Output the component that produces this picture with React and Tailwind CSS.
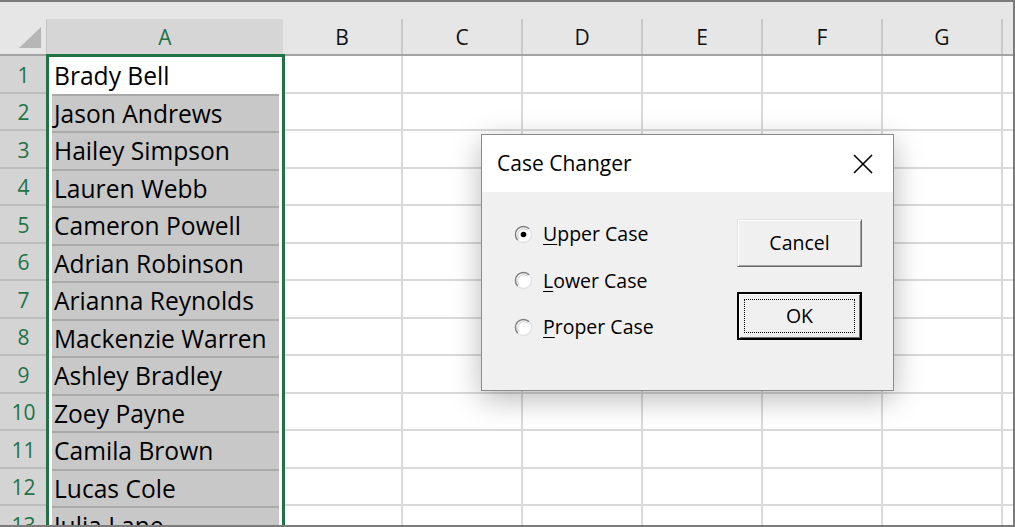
import React from "react";

const names = [
  "Brady Bell",
  "Jason Andrews",
  "Hailey Simpson",
  "Lauren Webb",
  "Cameron Powell",
  "Adrian Robinson",
  "Arianna Reynolds",
  "Mackenzie Warren",
  "Ashley Bradley",
  "Zoey Payne",
  "Camila Brown",
  "Lucas Cole",
  "Julia Lane",
];

const cols = ["B", "C", "D", "E", "F", "G", ""];

function Radio({ checked }) {
  return (
    <svg width="19" height="19" viewBox="0 0 19 19" className="shrink-0">
      <circle cx="9.5" cy="9.5" r="8" fill="#ffffff" />
      <path d="M3.8 15.2 A8 8 0 0 1 15.2 3.8" fill="none" stroke="#7a7a7a" strokeWidth="1.4" />
      <path d="M15.2 3.8 A8 8 0 0 1 3.8 15.2" fill="none" stroke="#e2e2e2" strokeWidth="1.4" />
      <path d="M5.2 13.8 A6.1 6.1 0 0 1 13.8 5.2" fill="none" stroke="#c8c8c8" strokeWidth="1" />
      {checked && <circle cx="9.5" cy="9.5" r="2.8" fill="#000" />}
    </svg>
  );
}

export default function App() {
  return (
    <div
      className="w-[1015px] h-[527px] relative overflow-hidden bg-white border-t-2 border-r-2 border-b-2 border-[#7b7b7b]"
      style={{ fontFamily: '"Open Sans", "Noto Sans", sans-serif' }}
    >
      <div className="h-[17px] bg-[#e6e6e6]" />
      {/* column header */}
      <div className="flex h-[37px] bg-[#e6e6e6] border-b-2 border-[#a3a3a3]">
        <div className="w-[47px] shrink-0 border-r border-[#c4c4c4] flex items-end justify-end pr-[5px] pb-[6px]">
          <svg width="22" height="21" viewBox="0 0 22 21">
            <polygon points="22,0 22,21 0,21" fill="#b6b6b6" />
          </svg>
        </div>
        <div className="w-[236px] shrink-0 bg-[#d6d6d6] flex items-center justify-center pt-[2px] text-[21px] text-[#217346]">
          A
        </div>
        {cols.map((c, i) => (
          <div
            key={i}
            className="w-[120px] shrink-0 border-r-2 border-[#c8c8c8] flex items-center justify-center pt-[2px] text-[21px] text-[#111]"
          >
            {c}
          </div>
        ))}
      </div>
      {/* rows */}
      {names.map((n, i) => (
        <div key={i} className="flex h-[37.5px]">
          <div className="w-[47px] shrink-0 bg-[#d4d4d4] border-b-2 border-[#bdbdbd] flex items-center justify-center pt-[3px] text-[21px] text-[#217346]">
            {i + 1}
          </div>
          <div className="w-[236px] shrink-0 pl-[5px] pr-[4px]">
            <div
              className={
                i === 0
                  ? "h-full bg-white flex items-center pl-[2px] pt-[3px] text-[24.6px] text-black"
                  : "h-full bg-[#c8c8c8] border-t-2 border-[#a9a9a9] flex items-center pl-[2px] pt-[2px] text-[24.6px] text-black"
              }
            >
              {n}
            </div>
          </div>
          {cols.map((c, j) => (
            <div key={j} className="w-[120px] shrink-0 border-r-2 border-b-2 border-[#dadada]" />
          ))}
        </div>
      ))}

      {/* selection border */}
      <div className="absolute left-[46px] top-[52px] w-[239px] h-[520px] border-[3px] border-[#217346]" />

      {/* dialog */}
      <div className="absolute left-[481px] top-[132px] w-[413px] h-[257px] bg-[#f0f0f0] border border-[#8c8c8c] shadow-[0_8px_28px_rgba(0,0,0,0.28)] flex flex-col text-black">
        <div className="h-[57px] bg-white flex items-center justify-between pl-[15px] pr-[20px]">
          <span className="text-[21px] leading-none">Case Changer</span>
          <svg width="20" height="20" viewBox="0 0 20 20">
            <path d="M1 1 L19 19 M19 1 L1 19" stroke="#000" strokeWidth="1.6" />
          </svg>
        </div>
        <div className="flex-1 flex justify-between pl-[32px] pr-[31px]">
          <div className="flex flex-col gap-[22.5px] pt-[30px]">
            {[
              ["U", "pper Case", true],
              ["L", "ower Case", false],
              ["P", "roper Case", false],
            ].map(([u, rest, ch], k) => (
              <div key={k} className="h-[24px] flex items-center gap-[10px] text-[19.5px]">
                <Radio checked={ch} />
                <span className="leading-none">
                  <span className="underline underline-offset-[3px] decoration-1">{u}</span>
                  {rest}
                </span>
              </div>
            ))}
          </div>
          <div className="flex flex-col gap-[25px] pt-[27px]">
            <div className="w-[125px] h-[48px] bg-[#f0f0f0] border border-t-[#e3e3e3] border-l-[#e3e3e3] border-r-[#696969] border-b-[#696969] shadow-[inset_1px_1px_0_#ffffff,inset_-1px_-1px_0_#a0a0a0] flex items-center justify-center text-[19.5px]">
              Cancel
            </div>
            <div className="w-[125px] h-[48px] bg-[#f0f0f0] border-2 border-black shadow-[inset_1px_1px_0_#ffffff,inset_-1px_-1px_0_#696969] flex p-[5px]">
              <div className="flex-1 border border-dotted border-black flex items-center justify-center text-[19.5px]">
                OK
              </div>
            </div>
          </div>
        </div>
      </div>
    </div>
  );
}
